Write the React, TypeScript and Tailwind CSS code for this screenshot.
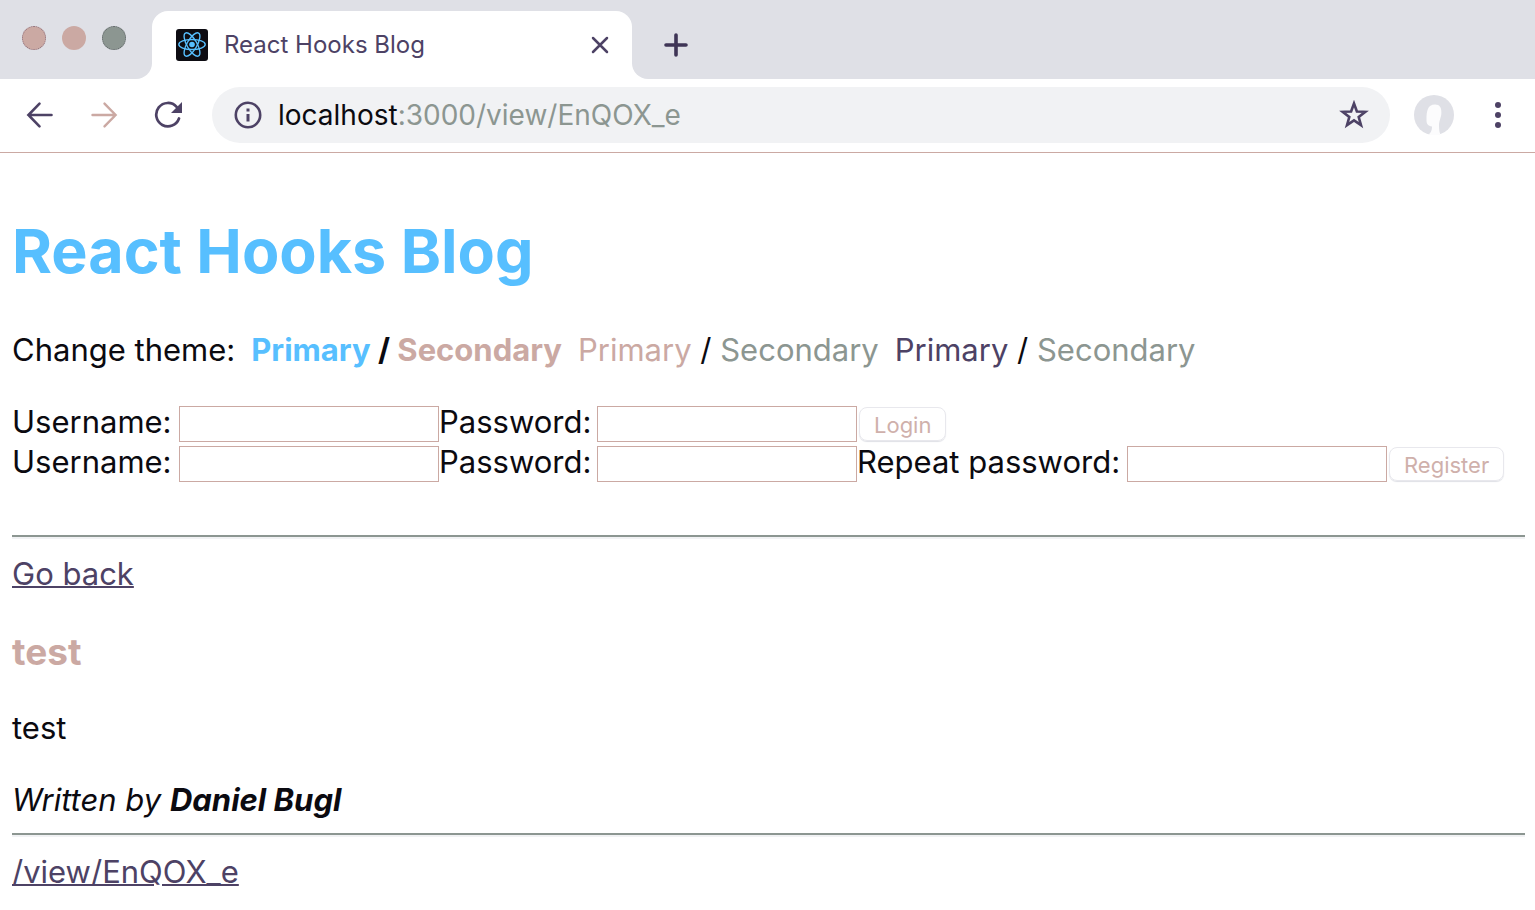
import { useId, type ReactNode } from 'react';

function ReactLogo() {
  return (
    <svg viewBox="0 0 32 32" className="size-8 shrink-0" aria-hidden="true">
      <rect width="32" height="32" rx="3" fill="#0d0c12" />
      <g fill="none" stroke="#57bfff" strokeWidth="1.4">
        <ellipse cx="16" cy="15.5" rx="13.2" ry="5" />
        <ellipse cx="16" cy="15.5" rx="13.2" ry="5" transform="rotate(60 16 15.5)" />
        <ellipse cx="16" cy="15.5" rx="13.2" ry="5" transform="rotate(120 16 15.5)" />
      </g>
      <circle cx="16" cy="15.5" r="2.8" fill="#57bfff" />
    </svg>
  );
}

function IconButton({ label, children }: { label: string; children: ReactNode }) {
  return (
    <button type="button" aria-label={label} className="flex size-10 shrink-0 items-center justify-center">
      {children}
    </button>
  );
}

function TabStrip() {
  return (
    <div className="flex bg-[#dfe0e6]">
      <div className="w-38 shrink-0 bg-white">
        <div className="flex h-[79px] gap-4 rounded-br-2xl bg-[#dfe0e6] pt-[26px] pl-[22px]">
          <span className="size-6 rounded-full border border-dotted border-[#8c6f7c] bg-[#cba9a3]" />
          <span className="size-6 rounded-full bg-[#cba9a3]" />
          <span className="size-6 rounded-full border border-dotted border-[#5f6468] bg-[#8c9691]" />
        </div>
      </div>
      <div className="flex w-[480px] items-end">
        <div className="flex h-[68px] w-full items-center rounded-t-2xl bg-white pr-3 pl-6">
          <ReactLogo />
          <span className="ml-4 grow text-2xl text-[#4d4265]">React Hooks Blog</span>
          <IconButton label="Close tab">
            <svg viewBox="0 0 20 20" className="size-5" stroke="#4d4265" strokeWidth="2.5" strokeLinecap="round">
              <path d="M3 3l14 14M17 3L3 17" />
            </svg>
          </IconButton>
        </div>
      </div>
      <div className="grow bg-white">
        <div className="flex h-[79px] items-end rounded-bl-2xl bg-[#dfe0e6] pb-[14px] pl-6">
          <IconButton label="New tab">
            <svg viewBox="0 0 24 24" className="size-6" stroke="#3f3556" strokeWidth="3.6" strokeLinecap="round">
              <path d="M12 2v20M2 12h20" />
            </svg>
          </IconButton>
        </div>
      </div>
    </div>
  );
}

function Toolbar() {
  return (
    <div className="flex items-center gap-6 border-b border-[#cba9a3] pt-2 pr-[17px] pb-[9px] pl-5">
      <IconButton label="Back">
        <svg viewBox="0 0 28 28" className="size-7" fill="none" stroke="#4d4265" strokeWidth="2.6" strokeLinecap="round">
          <path d="M25.500 14H2.500M13.500 2.600L2.400 14L13.500 25.400" />
        </svg>
      </IconButton>
      <IconButton label="Forward">
        <svg viewBox="0 0 28 28" className="size-7" fill="none" stroke="#cba9a3" strokeWidth="2.4" strokeLinecap="round">
          <path d="M2.500 14h23M14.500 2.600L25.600 14L14.500 25.400" />
        </svg>
      </IconButton>
      <IconButton label="Reload">
        <svg viewBox="0 0 28 28" className="size-7" fill="none">
          <path d="M25 17.5A11.7 11.7 0 1 1 22.6 5.8" stroke="#4d4265" strokeWidth="2.7" strokeLinecap="round" />
          <path d="M28 1v11H17z" fill="#4d4265" />
        </svg>
      </IconButton>
      <div className="flex h-14 grow items-center rounded-full bg-[#f1f2f4] pr-4 pl-[22px]">
        <svg viewBox="0 0 28 28" className="size-7 shrink-0" fill="none" aria-hidden="true">
          <circle cx="14" cy="14" r="12.2" stroke="#4d4265" strokeWidth="2.6" />
          <path d="M12.5 7.6h3v3h-3zM12.5 13h3v7.6h-3z" fill="#4d4265" />
        </svg>
        <span className="ml-4 grow text-[28px] text-[#0b0a10]">
          localhost<span className="text-[#8c9691]">:3000/view/EnQOX_e</span>
        </span>
        <IconButton label="Bookmark this page">
          <svg viewBox="0 0 30 30" className="size-[30px]" fill="none" stroke="#4d4265" strokeWidth="2.6">
            <path d="M15 3.5l2.9 8 8.4.3-6.6 5.2 2.3 8.1-7-4.7-7 4.7 2.3-8.1-6.6-5.2 8.4-.3z" />
          </svg>
        </IconButton>
      </div>
      <button type="button" aria-label="Profile" className="size-10 shrink-0">
        <svg viewBox="0 0 40 40" className="size-10">
          <circle cx="20" cy="20" r="20" fill="#dfe0e6" />
          <path d="M14.500 39.500c2-1.500 3.500-3.500 3.500-8-4-.5-5.500-2.500-5.500-6.500 0-9 1-15.500 8.500-15.500 5.500 0 6.700 4 6.300 9.500-.3 4-2.300 6.500-2.300 11.500 0 4.500.5 7.500 1.500 9-3.500 1.300-8.500 1.300-12 0z" fill="#fcfcfd" />
        </svg>
      </button>
      <IconButton label="Menu">
        <svg viewBox="0 0 8 28" className="h-7 w-2" fill="#4d4265">
          <circle cx="4" cy="4" r="3" />
          <circle cx="4" cy="14" r="3" />
          <circle cx="4" cy="24" r="3" />
        </svg>
      </IconButton>
    </div>
  );
}

function Theme({ primary, secondary, active }: { primary: string; secondary: string; active?: boolean }) {
  return (
    <button type="button" className={active ? 'font-bold' : ''}>
      <span className={primary}>Primary</span> / <span className={secondary}>Secondary</span>
    </button>
  );
}

function Field({ label, type, width }: { label: string; type: string; width: string }) {
  const id = useId();
  return (
    <div className="flex items-end">
      <label htmlFor={id} className={width}>{label}</label>
      <input id={id} type={type} className="h-9 w-65 border border-[#cba9a3] bg-white px-1 text-2xl" />
    </div>
  );
}

function Submit({ children }: { children: ReactNode }) {
  return (
    <button
      type="submit"
      disabled
      className="mt-1 ml-[2px] flex h-[34px] items-center rounded-lg border border-[#e8e8ed] px-[14px] pt-[2px] text-[22px] text-[#cfb0ab] shadow-[0_1px_1px_#dfe0e6]"
    >
      {children}
    </button>
  );
}

function Rule() {
  return <hr className="h-1 border-t-2 border-b-2 border-t-[#8c9691] border-b-[#f1f2f4]" />;
}

export default function App() {
  return (
    <div className="min-h-screen bg-white font-['Inter',sans-serif] text-[31px] leading-10 text-[#0b0a10]">
      <header>
        <TabStrip />
        <Toolbar />
      </header>
      <main className="pt-[58px] pr-[10px] pb-2 pl-3">
        <h1 className="text-[61px] leading-20 font-bold text-[#57bfff]">React Hooks Blog</h1>
        <div className="mt-[39px] flex flex-wrap gap-x-4">
          <span>Change theme:</span>
          <Theme active primary="text-[#57bfff]" secondary="text-[#cba9a3]" />
          <Theme primary="text-[#cba9a3]" secondary="text-[#8c9691]" />
          <Theme primary="text-[#4d4265]" secondary="text-[#8c9691]" />
        </div>
        <form className="mt-8 flex flex-wrap items-center" onSubmit={(e) => e.preventDefault()}>
          <Field label="Username:" type="text" width="w-[167px]" />
          <Field label="Password:" type="password" width="w-[158px]" />
          <Submit>Login</Submit>
        </form>
        <form className="flex flex-wrap items-center" onSubmit={(e) => e.preventDefault()}>
          <Field label="Username:" type="text" width="w-[167px]" />
          <Field label="Password:" type="password" width="w-[158px]" />
          <Field label="Repeat password:" type="password" width="w-[270px]" />
          <Submit>Register</Submit>
        </form>
        <div className="mt-[53px]">
          <Rule />
        </div>
        <a href="#home" className="mt-[15px] inline-block text-[#4d4265] underline decoration-2">Go back</a>
        <article>
          <h2 className="mt-[38px] text-[37px] leading-10 font-bold text-[#cba9a3]">test</h2>
          <p className="mt-9">test</p>
          <p className="mt-8 mb-[13px] italic">
            Written by <b>Daniel Bugl</b>
          </p>
        </article>
        <Rule />
        <a href="#/view/EnQOX_e" className="mt-[15px] inline-block text-[#4d4265] underline decoration-2">/view/EnQOX_e</a>
      </main>
    </div>
  );
}
